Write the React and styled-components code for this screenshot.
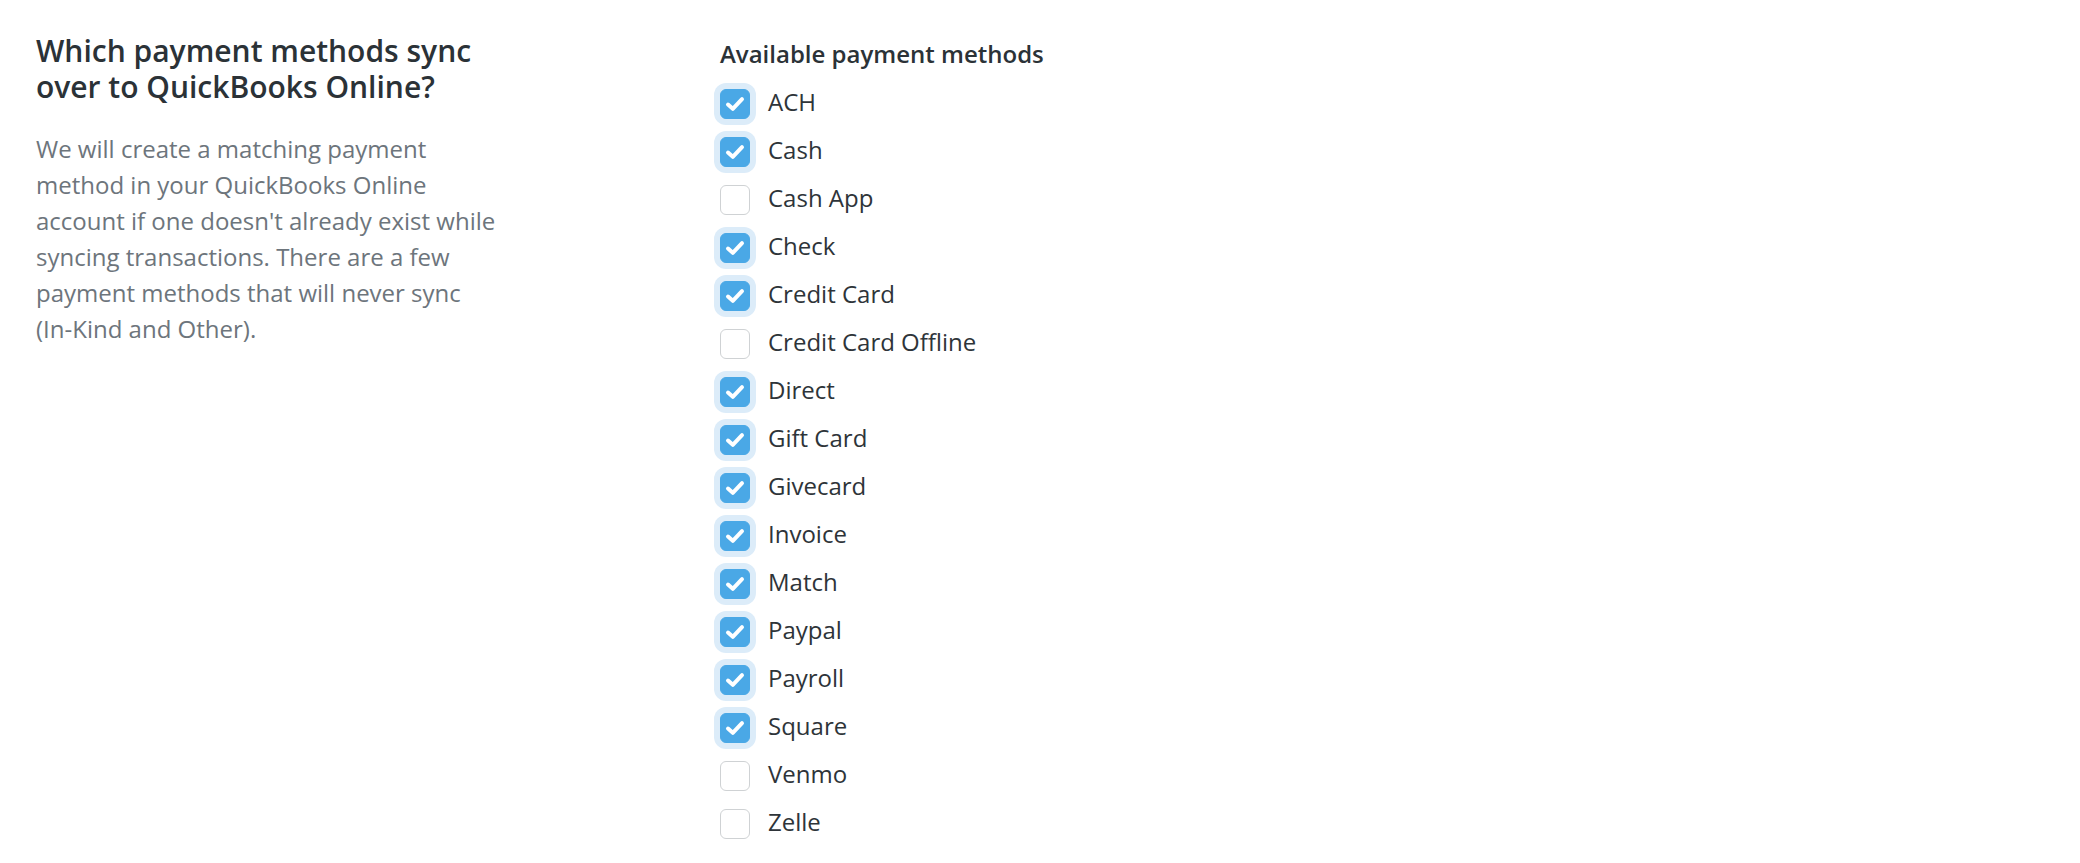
import styled, { createGlobalStyle } from 'styled-components'

const methods = [
  ['ACH', true],
  ['Cash', true],
  ['Cash App', false],
  ['Check', true],
  ['Credit Card', true],
  ['Credit Card Offline', false],
  ['Direct', true],
  ['Gift Card', true],
  ['Givecard', true],
  ['Invoice', true],
  ['Match', true],
  ['Paypal', true],
  ['Payroll', true],
  ['Square', true],
  ['Venmo', false],
  ['Zelle', false],
]

const App = () => {
  return (
    <>
      <GlobalStyle />
      <Page>
        <Intro>
          <Title>Which payment methods sync over to QuickBooks Online?</Title>
          <Text>
            We will create a matching payment method in your QuickBooks Online
            account if one doesn't already exist while syncing transactions. There
            are a few payment methods that will never sync (In-Kind and Other).
          </Text>
        </Intro>
        <Methods>
          <Label>Available payment methods</Label>
          <List>
            {methods.map(([name, checked]) => (
              <Row key={name}>
                <Box checked={checked}>
                  {checked && (
                    <svg width="22" height="22" viewBox="0 0 22 22">
                      <path d="M4 11.5 L8.8 15.8 L18 6.2" fill="none" stroke="#fff" strokeWidth="4" strokeLinecap="round" strokeLinejoin="round" />
                    </svg>
                  )}
                </Box>
                <Name>{name}</Name>
              </Row>
            ))}
          </List>
        </Methods>
      </Page>
    </>
  )
}

export default App

const GlobalStyle = createGlobalStyle`
  body {
    margin: 0;
    background: #fff;
    font-family: "Open Sans", "Noto Sans", sans-serif;
    color: #2e3439;
  }
`

const Page = styled.div`
  display: grid;
  grid-template-columns: 463px 1fr;
  column-gap: 221px;
  padding: 33px 0 0 36px;
`

const Intro = styled.div``

const Title = styled.h2`
  margin: 0;
  font-size: 30px;
  line-height: 36px;
  font-weight: 600;
  color: #2b3237;
`

const Text = styled.p`
  margin: 26px 0 0;
  font-size: 24px;
  line-height: 36px;
  color: #6d757c;
`

const Methods = styled.div`
  padding-top: 6px;
`

const Label = styled.div`
  font-size: 24px;
  line-height: 30px;
  font-weight: 600;
  color: #2b3237;
`

const List = styled.div`
  margin-top: 11px;
  display: flex;
  flex-direction: column;
`

const Row = styled.label`
  display: flex;
  align-items: center;
  height: 48px;
  gap: 18px;
`

const Box = styled.span`
  width: 30px;
  height: 30px;
  box-sizing: border-box;
  border-radius: 6px;
  display: flex;
  align-items: center;
  justify-content: center;
  flex-shrink: 0;
  background: ${p => (p.checked ? '#4aa8e6' : '#fff')};
  border: 1px solid ${p => (p.checked ? '#4aa8e6' : '#cfd2d4')};
  box-shadow: ${p => (p.checked ? '0 0 0 6px #dcecf9' : 'none')};
`

const Name = styled.span`
  font-size: 24px;
  line-height: 30px;
  color: #2e3439;
  margin-top: -4px;
`
